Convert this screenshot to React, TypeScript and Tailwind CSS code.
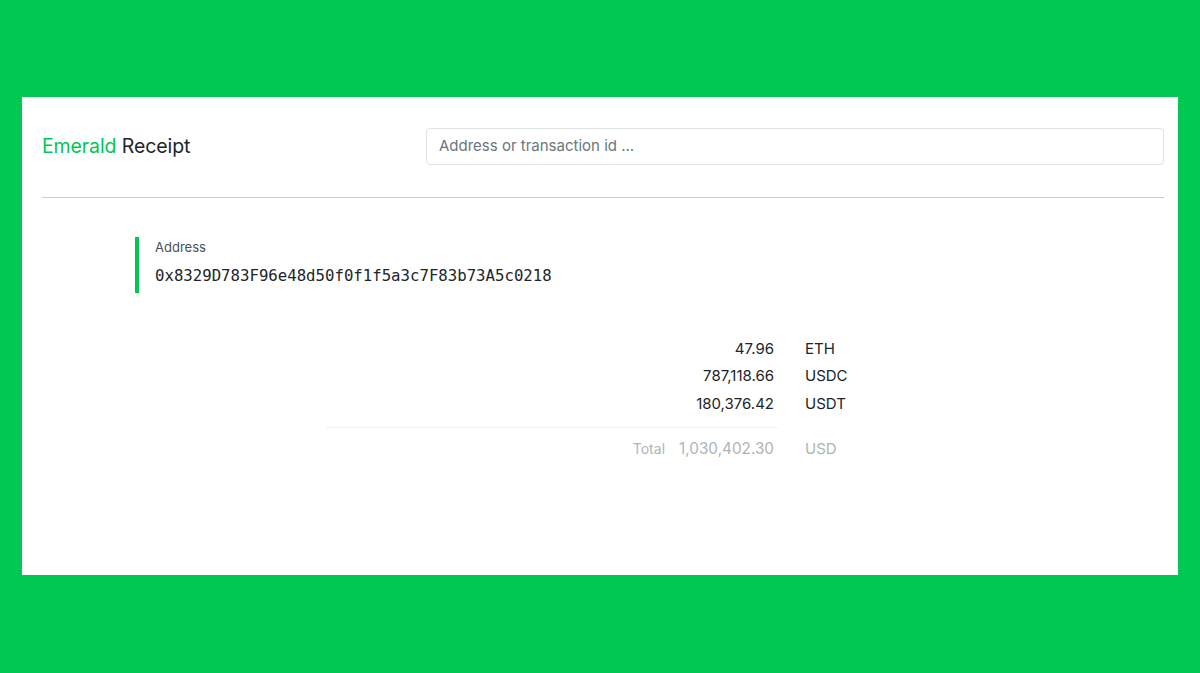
import React from "react";

const rows = [
  { amount: "47.96", unit: "ETH" },
  { amount: "787,118.66", unit: "USDC" },
  { amount: "180,376.42", unit: "USDT" },
];

export default function App() {
  return (
    <div className="w-[1200px] h-[673px] bg-[#00c853] pt-[97px] px-[22px]" style={{ fontFamily: "Inter, 'Noto Sans', sans-serif" }}>
      <div className="bg-white h-[478px] pl-[20px] pr-[14px]">
        <div className="flex items-center h-[101px] border-b border-[#c8cccc]">
          <div className="w-[384px] text-[19.5px] text-[#212529] tracking-[-0.1px]">
            <span className="text-[#00c853]">Emerald</span> Receipt
          </div>
          <div className="flex-1 h-[37px] -mt-[2px] border border-[#dfe2e3] rounded-[4px] flex items-center px-[12px] text-[15px] text-[#6c757d]">
            Address or transaction id ...
          </div>
        </div>
        <div className="pl-[93px] pt-[39px]">
          <div className="border-l-[4px] border-[#00c853] pl-[16px] h-[56px] pt-[2px]">
            <div className="text-[13px] text-[#495057] leading-[16px]">Address</div>
            <div className="text-[15.7px] text-[#212529] leading-[24px] mt-[9px]" style={{ fontFamily: "'DejaVu Sans Mono', monospace" }}>
              0x8329D783F96e48d50f0f1f5a3c7F83b73A5c0218
            </div>
          </div>
        </div>
        <div className="flex justify-end pr-[303px] pt-[42px]">
          <div className="w-[534px]">
            {rows.map((r) => (
              <div key={r.unit} className="flex h-[27.5px] items-center text-[15px] text-[#212529]">
                <div className="flex-1 text-right">{r.amount}</div>
                <div className="w-[87px] pl-[31px]">{r.unit}</div>
              </div>
            ))}
            <div className="mt-[9px] border-t border-dotted border-[#e6e8e8] w-[451px]" />
            <div className="flex h-[38px] items-center text-[#adb5b5] pt-[6px]">
              <div className="flex-1 flex justify-end items-baseline gap-[14px]">
                <span className="text-[14px]">Total</span>
                <span className="text-[15.3px]">1,030,402.30</span>
              </div>
              <div className="w-[87px] pl-[31px] text-[15px]">USD</div>
            </div>
          </div>
        </div>
      </div>
    </div>
  );
}
